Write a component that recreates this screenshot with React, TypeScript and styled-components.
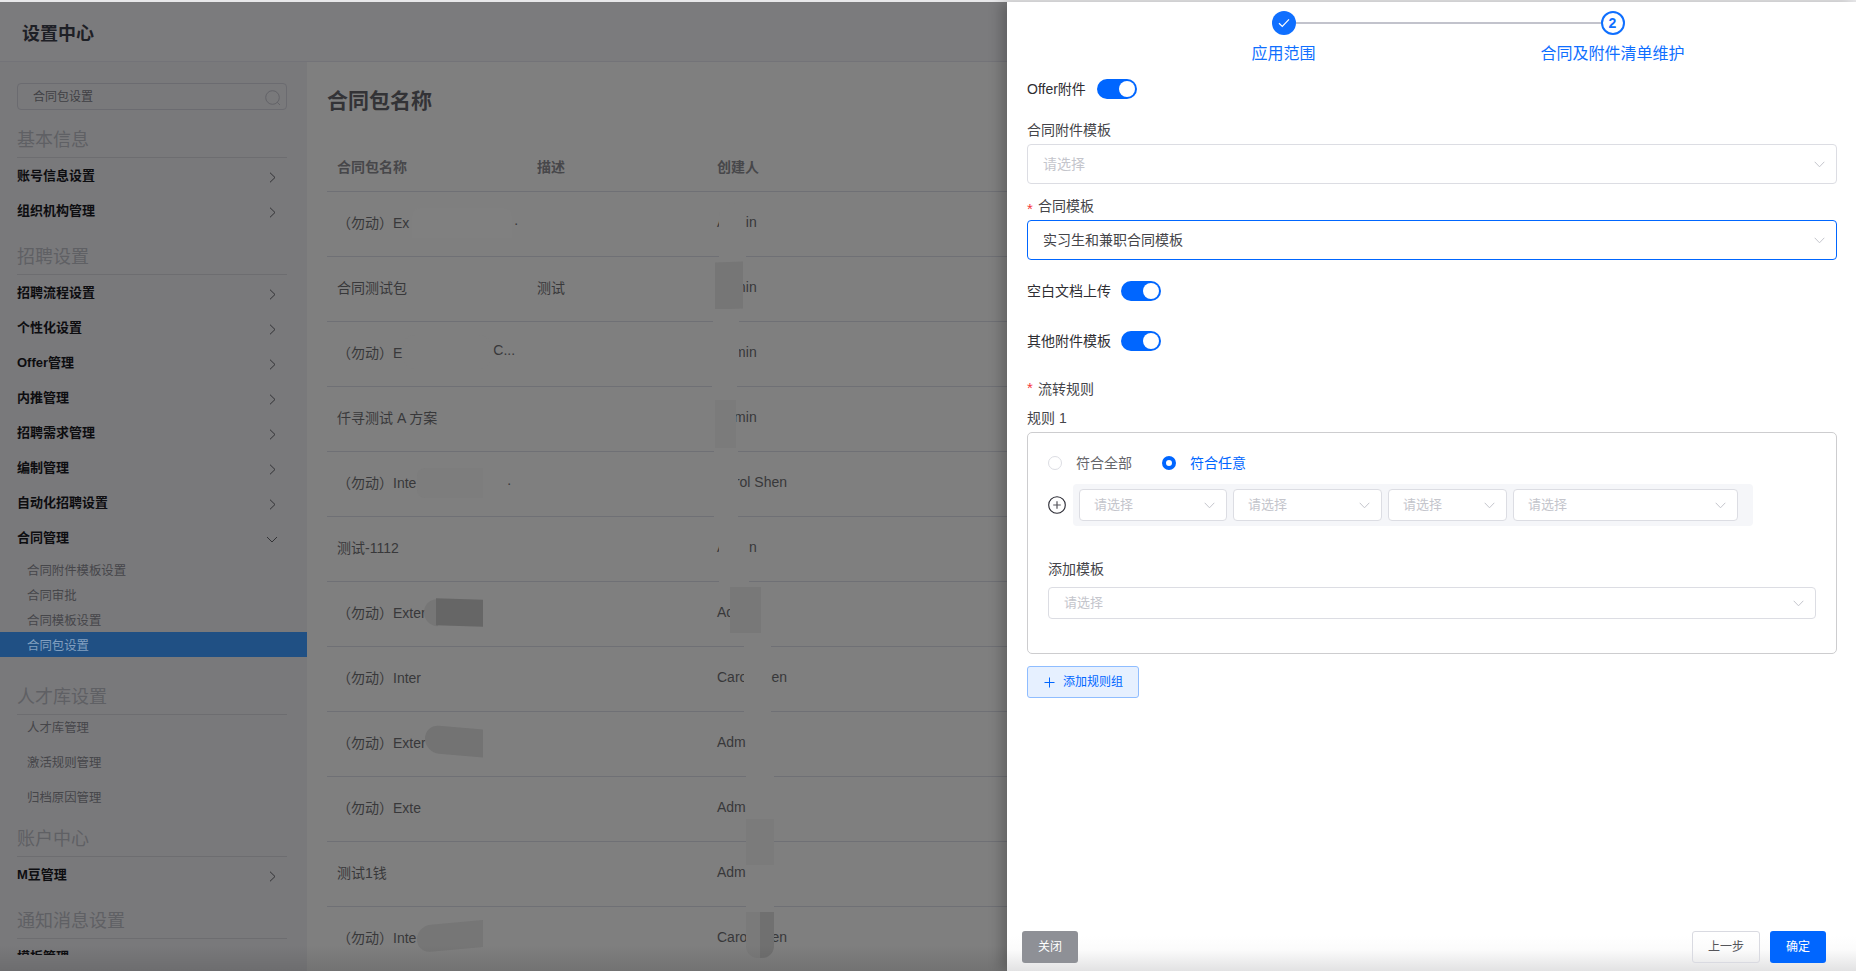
import React from "react";
import styled, { createGlobalStyle } from "styled-components";

const Global = createGlobalStyle`
  html, body { margin: 0; padding: 0; height: 100%; overflow: hidden; }
  body { font-family: "Liberation Sans", "Noto Sans CJK SC", sans-serif; font-size: 14px; background: #e8e8ea; }
  * { box-sizing: border-box; }
`;

const Page = styled.div`
  width: 1856px; height: 971px; padding-top: 2px; display: flex; overflow: hidden; position: relative;
`;
const Backdrop = styled.div`
  width: 1007px; flex: none; display: flex; flex-direction: column; position: relative; background: #7f7f7f;
`;
const BottomFade = styled.div`
  position: absolute; left: 0; right: 0; bottom: 0; height: 26px;
  background: linear-gradient(to bottom, rgba(0,0,0,0), rgba(0,0,0,.1)); pointer-events: none; z-index: 3;
`;
const TopBar = styled.header`
  height: 60px; flex: none; display: flex; align-items: center; padding: 0 0 0 22px;
  background: #7b7b7d; border-bottom: 1px solid #737378;
  font-size: 18px; font-weight: 700; color: #1e2026;
`;
const Body = styled.div`flex: 1; min-height: 0; display: flex;`;
const Sidebar = styled.aside`
  width: 307px; flex: none; background: #79797b; display: flex; flex-direction: column; padding: 21px 0 16px;
`;
const SearchBox = styled.div`
  margin: 0 20px 0 17px; height: 27px; border: 1px solid #6b6b70; border-radius: 4px; flex: none;
  display: flex; align-items: center; justify-content: space-between; padding: 0 5px 2px 15px;
  font-size: 12px; color: #404044;
  svg { margin-top: 5px; }
`;
const NavScroll = styled.nav`flex: 1; min-height: 0; overflow: hidden;`;
const SectionTitle = styled.div<{ $h?: number }>`
  height: ${(p) => p.$h ?? 47}px; margin: 0 20px 0 17px; display: flex; align-items: flex-end; padding-bottom: 6px;
  border-bottom: 1px solid #6d6d70; font-size: 18px; line-height: 22px; color: #5f6064;
`;
const NavRow = styled.div`
  height: 35px; padding: 0 31px 3px 17px; display: flex; align-items: center; justify-content: space-between;
  font-size: 13px; font-weight: 700; color: #0d0d10;
  svg { margin-top: 7px; }
  svg.open { margin-right: -2px; }
`;
const SubList = styled.div`margin-top: 2px;`;
const SubRow = styled.div<{ $active?: boolean }>`
  height: 25px; padding-left: 27px; display: flex; align-items: center; font-size: 12.4px;
  color: ${(p) => (p.$active ? "#83a0c0" : "#46464a")};
  background: ${(p) => (p.$active ? "#205084" : "transparent")};
`;
const LooseRow = styled.div`
  height: 35px; padding: 0 0 11px 27px; display: flex; align-items: center; font-size: 12.4px; color: #46464a;
`;
const Gap = styled.div<{ $h: number }>`height: ${(p) => p.$h}px;`;

const Content = styled.main`
  flex: 1; position: relative; padding-left: 20px; overflow: hidden; background: #7f7f7f;
`;
const ContentTitle = styled.h2`
  margin: 0; height: 80px; padding-top: 24px; font-size: 21px; line-height: 30px; font-weight: 700; color: #333336;
`;
const HeadRow = styled.div`
  height: 50px; display: grid; grid-template-columns: 200px 180px 1fr; padding: 0 0 1px 10px; align-items: center;
  border-bottom: 1px solid #6f7075; font-size: 14px; font-weight: 700; color: #47474a;
`;
const Row = styled.div`
  height: 65px; flex: none; display: grid; grid-template-columns: 200px 180px 1fr; padding: 0 0 5px 10px; align-items: center;
  border-bottom: 1px solid #6f7075; font-size: 14px; color: #38383a;
`;
const Name = styled.div`display: flex; white-space: pre;`;
const Tail = styled.span<{ $gap: number }>`margin-left: ${(p) => p.$gap}px;`;
const Patch = styled.div<{ $x: number; $y: number; $w: number; $h: number; $c: string; $r?: string; $s?: number }>`
  position: absolute; left: ${(p) => p.$x - 307}px; top: ${(p) => p.$y - 62}px;
  width: ${(p) => p.$w}px; height: ${(p) => p.$h}px; background: ${(p) => p.$c};
  border-radius: ${(p) => p.$r ?? "0"};
  transform: skewY(${(p) => p.$s ?? 0}deg);
`;

const Drawer = styled.section`
  flex: 1; min-width: 0; background: #fff; display: flex; flex-direction: column; position: relative; z-index: 5;
  box-shadow: -6px 0 12px rgba(0,0,0,.22);
`;
const Form = styled.div`flex: 1; padding: 0 19px 0 20px; min-height: 0;`;
const Stepper = styled.div`display: flex; padding-left: 92px; padding-top: 9px;`;
const Step = styled.div`
  width: 329px; display: flex; flex-direction: column; align-items: center; position: relative; color: #0f6fff; font-size: 16px; line-height: 22px;
`;
const Connector = styled.div`
  position: absolute; top: 11px; left: calc(50% + 12px); width: 305px; height: 2px; background: #c2c3cc;
`;
const DoneDot = styled.div`
  width: 24px; height: 24px; border-radius: 50%; background: #0f6fff; display: flex; align-items: center; justify-content: center; margin-bottom: 8px;
`;
const NumDot = styled.div`
  width: 24px; height: 24px; border-radius: 50%; border: 2px solid #0f6fff; display: flex; align-items: center; justify-content: center;
  font-size: 14px; font-weight: 700; color: #0f6fff; margin-bottom: 8px; background: #fff;
`;
const Inline = styled.div<{ $top: number; $gap?: number }>`
  display: flex; align-items: center; gap: ${(p) => p.$gap ?? 10}px; height: 20px; margin-top: ${(p) => p.$top}px; font-size: 14px; color: #2e2e33;
`;
const InlineLabel = styled.span`position: relative; top: -1px;`;
const Switch = styled.div`
  width: 40px; height: 20px; border-radius: 10px; background: #0066ff; display: flex; align-items: center; justify-content: flex-end; padding-right: 2px;
`;
const Knob = styled.div`width: 16px; height: 16px; border-radius: 50%; background: #fff;`;
const FieldLabel = styled.div<{ $top: number }>`
  height: 20px; margin-top: ${(p) => p.$top}px; padding-bottom: 2px; font-size: 14px; color: #45454a; display: flex; align-items: center;
`;
const Star = styled.span<{ $raise?: boolean }>`
  color: #f5383b; width: 11px; font-size: 15px; line-height: 14px; margin-top: ${(p) => (p.$raise ? 0 : 7)}px;
`;
const Select = styled.div<{ $w?: number; $h?: number; $focus?: boolean; $top?: number; $small?: boolean; $pad?: number }>`
  ${(p) => (p.$w ? `width: ${p.$w}px; flex: none;` : "")}
  height: ${(p) => p.$h ?? 40}px; margin-top: ${(p) => p.$top ?? 4}px; background: #fff;
  border: 1px solid ${(p) => (p.$focus ? "#0066ff" : "#dcdde3")}; border-radius: 4px;
  display: flex; align-items: center; justify-content: space-between; padding: 0 11px 3px ${(p) => p.$pad ?? (p.$small ? 14 : 15)}px;
  font-size: ${(p) => (p.$small ? 13 : 14)}px; color: ${(p) => (p.$focus ? "#45454a" : "#c4c5cc")};
  svg { margin-top: 3px; }
`;
const Card = styled.div`
  margin-top: 4px; height: 222px; border: 1px solid #cdcdcf; border-radius: 5px; padding: 20px 20px 0;
`;
const RadioRow = styled.div`display: flex; align-items: center; height: 20px; font-size: 14px;`;
const Radio = styled.div<{ $on?: boolean }>`
  width: 14px; height: 14px; border-radius: 50%; margin-right: 14px; background: #fff;
  border: ${(p) => (p.$on ? "4.5px solid #0066ff" : "1px solid #dcdde3")};
`;
const RadioText = styled.span<{ $on?: boolean }>`
  color: ${(p) => (p.$on ? "#0066ff" : "#66666b")}; margin-right: 30px; position: relative; top: -1px;
`;
const RuleLine = styled.div`display: flex; align-items: center; gap: 7px; margin-top: 11px;`;
const RuleGroup = styled.div`
  width: 680px; height: 42px; background: #f5f6f9; border-radius: 4px; padding: 5px 6px; display: flex; gap: 6px;
`;
const AddButton = styled.div`
  margin-top: 12px; width: 112px; height: 32px; background: #e6f0ff; border: 1px solid #8fbdff; border-radius: 3px;
  display: flex; align-items: center; gap: 8px; padding: 0 0 3px 16px; font-size: 12px; color: #0066ff;
  svg { margin-top: 3px; }
`;
const Footer = styled.footer`
  flex: none; height: 70px; display: flex; align-items: flex-end; padding: 0 30px 8px 15px; gap: 10px;
  background: linear-gradient(to bottom, #fff 0, #fff 50%, #fbfbfb 70%, #e2e2e3 100%);
`;
const Btn = styled.div<{ $kind: "gray" | "line" | "primary"; $w: number }>`
  width: ${(p) => p.$w}px; height: 32px; border-radius: 3px; display: flex; align-items: center; justify-content: center; font-size: 12px; padding-bottom: 3px;
  background: ${(p) => (p.$kind === "gray" ? "#8e9096" : p.$kind === "primary" ? "#0066ff" : "transparent")};
  color: ${(p) => (p.$kind === "line" ? "#55555a" : "#fff")};
  border: ${(p) => (p.$kind === "line" ? "1px solid #d9dae1" : "none")};
`;
const Spacer = styled.div`flex: 1;`;

const ChevDown = ({ c = "#c4c5cc", w = 11 }: { c?: string; w?: number }) => (
  <svg width={w} height={7} viewBox="0 0 11 7" fill="none"><path d="M.7.8 5.5 5.8 10.3.8" stroke={c} strokeWidth="1" /></svg>
);
const ChevRight = () => (
  <svg width={7} height={11} viewBox="0 0 7 11" fill="none"><path d="M1 .7 6 5.5 1 10.3" stroke="#333336" strokeWidth="1" /></svg>
);
const ArrowDown = () => (
  <svg className="open" width={12} height={7} viewBox="0 0 12 7" fill="none"><path d="M1 1 6 6 11 1" stroke="#333336" strokeWidth="1" /></svg>
);
const SearchIcon = () => (
  <svg width={16} height={16} viewBox="0 0 16 16" fill="none"><circle cx="7.5" cy="7.5" r="6.8" stroke="#636368" /><path d="M12.2 12.2 15 15" stroke="#636368" /></svg>
);
const CheckIcon = () => (
  <svg width={12} height={10} viewBox="0 0 12 10" fill="none"><path d="M1 5.2 4.3 8.4 11 1.4" stroke="#fff" strokeWidth="1.2" /></svg>
);
const CirclePlus = () => (
  <svg width={18} height={18} viewBox="0 0 18 18" fill="none" style={{ flex: "none" }}>
    <circle cx="9" cy="9" r="8.3" stroke="#2a2a33" strokeWidth="1.1" />
    <path d="M9 5.2V12.8M5.2 9H12.8" stroke="#55555c" strokeWidth="1.2" />
  </svg>
);
const PlusIcon = () => (
  <svg width={11} height={11} viewBox="0 0 11 11" fill="none"><path d="M5.5 .5V10.5M.5 5.5H10.5" stroke="#0066ff" /></svg>
);

const rows: { name: string; tail?: string; gap?: number; desc?: string; who: string }[] = [
  { name: "（勿动）Ex", tail: ".", gap: 105, who: "Admin" },
  { name: "合同测试包", desc: "测试", who: "Admin" },
  { name: "（勿动）E", tail: "C...", gap: 91, who: "Admin" },
  { name: "仟寻测试 A 方案", who: "Admin" },
  { name: "（勿动）Inte", tail: ".", gap: 91, who: "Carol Shen" },
  { name: "测试-1112", who: "Admin" },
  { name: "（勿动）Exter", who: "Admin" },
  { name: "（勿动）Inter", who: "Carol Shen" },
  { name: "（勿动）Exter", who: "Admin" },
  { name: "（勿动）Exte", who: "Admin" },
  { name: "测试1钱", who: "Admin" },
  { name: "（勿动）Inte", who: "Carol Shen" },
];

const BG = "#7f7f7f";
const patches: { x: number; y: number; w: number; h: number; c: string; r?: string; s?: number }[] = [
  { x: 412, y: 208, w: 100, h: 30, c: "#808080", r: "8px 8px 0 0" },
  { x: 719, y: 203, w: 27, h: 57, c: BG, r: "13px 13px 0 0" },
  { x: 715, y: 262, w: 28, h: 47, c: "#767676", s: -2 },
  { x: 713, y: 309, w: 26, h: 62, c: BG },
  { x: 403, y: 335, w: 88, h: 34, c: BG, r: "12px" },
  { x: 490, y: 345, w: 3, h: 16, c: BG },
  { x: 712, y: 371, w: 25, h: 29, c: BG },
  { x: 715, y: 400, w: 21, h: 48, c: "#7b7b7b" },
  { x: 714, y: 448, w: 24, h: 70, c: BG },
  { x: 417, y: 468, w: 66, h: 30, c: "#7d7d7d", r: "8px 0 0 8px" },
  { x: 719, y: 518, w: 30, h: 68, c: BG },
  { x: 424, y: 599, w: 14, h: 27, c: "#767676", r: "14px 0 0 14px", s: 2 },
  { x: 436, y: 599, w: 47, h: 27, c: "#666666", s: 2 },
  { x: 730, y: 587, w: 31, h: 46, c: "#787878" },
  { x: 744, y: 633, w: 27, h: 85, c: BG },
  { x: 423, y: 660, w: 8, h: 26, c: BG },
  { x: 425, y: 727, w: 58, h: 28, c: "#737373", r: "14px 0 0 14px", s: 5 },
  { x: 746, y: 718, w: 28, h: 101, c: BG },
  { x: 746, y: 819, w: 28, h: 46, c: "#7b7b7b" },
  { x: 746, y: 865, w: 28, h: 47, c: BG },
  { x: 417, y: 923, w: 66, h: 27, c: "#767676", r: "14px 0 0 14px", s: -5 },
  { x: 746, y: 912, w: 14, h: 46, c: "#7a7a7a", r: "0 0 0 12px" },
  { x: 760, y: 912, w: 14, h: 46, c: "#707070", r: "0 0 12px 0" },
];

const nav1 = ["招聘流程设置", "个性化设置", "Offer管理", "内推管理", "招聘需求管理", "编制管理", "自动化招聘设置"];

export default function App() {
  return (
    <>
      <Global />
      <Page>
        <Backdrop>
          <TopBar>设置中心</TopBar>
          <Body>
            <Sidebar>
              <SearchBox>合同包设置<SearchIcon /></SearchBox>
              <NavScroll>
                <SectionTitle $h={48}>基本信息</SectionTitle>
                <NavRow>账号信息设置<ChevRight /></NavRow>
                <NavRow>组织机构管理<ChevRight /></NavRow>
                <SectionTitle>招聘设置</SectionTitle>
                {nav1.map((t) => <NavRow key={t}>{t}<ChevRight /></NavRow>)}
                <NavRow>合同管理<ArrowDown /></NavRow>
                <SubList>
                  <SubRow>合同附件模板设置</SubRow>
                  <SubRow>合同审批</SubRow>
                  <SubRow>合同模板设置</SubRow>
                  <SubRow $active>合同包设置</SubRow>
                </SubList>
                <Gap $h={11} />
                <SectionTitle>人才库设置</SectionTitle>
                <LooseRow>人才库管理</LooseRow>
                <LooseRow>激活规则管理</LooseRow>
                <LooseRow>归档原因管理</LooseRow>
                <SectionTitle $h={37}>账户中心</SectionTitle>
                <NavRow>M豆管理<ChevRight /></NavRow>
                <SectionTitle>通知消息设置</SectionTitle>
                <NavRow>模板管理</NavRow>
              </NavScroll>
            </Sidebar>
            <Content>
              <ContentTitle>合同包名称</ContentTitle>
              <HeadRow><span>合同包名称</span><span>描述</span><span>创建人</span></HeadRow>
              {rows.map((r, i) => (
                <Row key={i}>
                  <Name>{r.name}{r.tail && <Tail $gap={r.gap ?? 0}>{r.tail}</Tail>}</Name>
                  <span>{r.desc}</span>
                  <span>{r.who}</span>
                </Row>
              ))}
              {patches.map((p, i) => (
                <Patch key={i} $x={p.x} $y={p.y} $w={p.w} $h={p.h} $c={p.c} $r={p.r} $s={p.s} />
              ))}
            </Content>
          </Body>
          <BottomFade />
        </Backdrop>
        <Drawer>
          <Form>
            <Stepper>
              <Step><DoneDot><CheckIcon /></DoneDot>应用范围<Connector /></Step>
              <Step><NumDot>2</NumDot>合同及附件清单维护</Step>
            </Stepper>
            <Inline $top={14} $gap={11}><InlineLabel>Offer附件</InlineLabel><Switch><Knob /></Switch></Inline>
            <FieldLabel $top={21}>合同附件模板</FieldLabel>
            <Select>请选择<ChevDown /></Select>
            <FieldLabel $top={12}><Star>*</Star>合同模板</FieldLabel>
            <Select $focus>实习生和兼职合同模板<ChevDown /></Select>
            <Inline $top={21}><InlineLabel>空白文档上传</InlineLabel><Switch><Knob /></Switch></Inline>
            <Inline $top={30}><InlineLabel>其他附件模板</InlineLabel><Switch><Knob /></Switch></Inline>
            <FieldLabel $top={28}><Star $raise>*</Star>流转规则</FieldLabel>
            <FieldLabel $top={9}>规则 1</FieldLabel>
            <Card>
              <RadioRow>
                <Radio /><RadioText>符合全部</RadioText>
                <Radio $on /><RadioText $on>符合任意</RadioText>
              </RadioRow>
              <RuleLine>
                <CirclePlus />
                <RuleGroup>
                  <Select $w={148} $h={32} $top={0} $small>请选择<ChevDown /></Select>
                  <Select $w={149} $h={32} $top={0} $small>请选择<ChevDown /></Select>
                  <Select $w={119} $h={32} $top={0} $small>请选择<ChevDown /></Select>
                  <Select $w={225} $h={32} $top={0} $small>请选择<ChevDown /></Select>
                </RuleGroup>
              </RuleLine>
              <FieldLabel $top={33}>添加模板</FieldLabel>
              <Select $h={32} $top={8} $small $pad={15}>请选择<ChevDown /></Select>
            </Card>
            <AddButton><PlusIcon />添加规则组</AddButton>
          </Form>
          <Footer>
            <Btn $kind="gray" $w={56}>关闭</Btn>
            <Spacer />
            <Btn $kind="line" $w={68}>上一步</Btn>
            <Btn $kind="primary" $w={56}>确定</Btn>
          </Footer>
        </Drawer>
      </Page>
    </>
  );
}
